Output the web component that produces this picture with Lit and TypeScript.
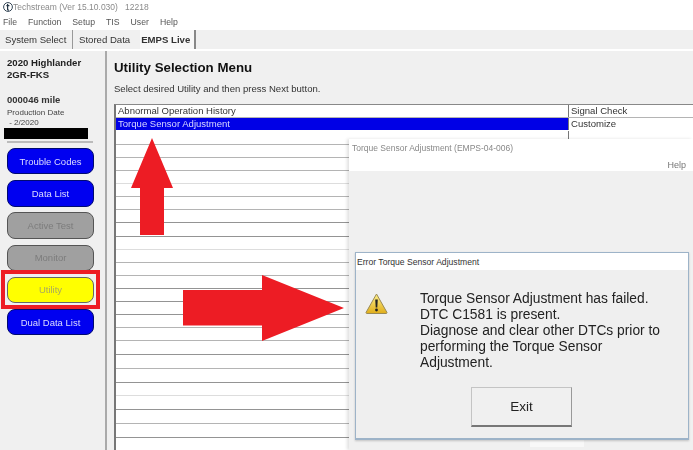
import { LitElement, html, css } from "lit";
import { customElement } from "lit/decorators.js";

const DARK = new Set([8, 9, 13, 14, 15, 18, 20, 22, 24]);
const LIGHT = new Set([5, 10, 21]);

@customElement("app-root")
export class AppRoot extends LitElement {
  static styles = css`
    :host { display: block; width: 693px; height: 450px; overflow: hidden; position: relative; background: #fff; font-family: "Liberation Sans", sans-serif; color: #222; }
    .screen { width: 693px; height: 450px; display: flex; flex-direction: column; filter: blur(0.35px); }
    .title { height: 14px; display: flex; align-items: center; gap: 0; padding-left: 3px; font-size: 8.5px; color: #8a8a8a; white-space: pre; flex: none; }
    .menu { height: 16px; display: flex; padding-left: 3px; gap: 11px; align-items: center; font-size: 8.7px; color: #555; flex: none; }
    .tabs { height: 19px; margin-bottom: 2px; background: #f0f0f0; display: flex; align-items: center; font-size: 9.6px; color: #333; flex: none; }
    .tab { height: 100%; display: flex; align-items: center; }
    .tab.one { width: 73px; box-sizing: border-box; padding-left: 5px; border-right: 1px solid #999; }
    .tab.two { padding: 0 10px 0 6px; }
    .tab.live { padding: 0 4px 0 1px; font-weight: 700; border-right: 2px solid #888; background: #f8f8f8; color: #333; }
    .body { flex: 1; display: flex; background: #f0f0f0; min-height: 0; }
    .side { width: 105px; flex: none; padding: 6px 0 0 0; box-sizing: border-box; color: #222; display: flex; flex-direction: column; }
    .veh { padding-left: 7px; font-size: 9.6px; font-weight: 700; line-height: 12px; }
    .mile { padding: 13px 0 0 7px; font-size: 9.5px; font-weight: 700; line-height: 12px; color: #333; }
    .prod { padding: 2px 0 0 7px; font-size: 8px; line-height: 9.5px; color: #444; white-space: pre; }
    .redact { margin: 1px 0 0 4px; width: 84px; height: 11px; background: #000; }
    .sep { margin: 2px 0 0 7px; width: 86px; height: 2px; background: #bbb; }
    .btns { margin: 5px 0 0 7px; width: 87px; display: flex; flex-direction: column; gap: 5.8px; }
    .btn { height: 26.4px; box-sizing: border-box; border-radius: 8px; display: flex; align-items: center; justify-content: center; font-size: 9.5px; border: 1px solid #333; }
    .btn.blue { background: #0000f0; color: #dcdcff; border-color: #000a70; }
    .btn.gray { background: #a0a0a0; color: #7c7c7c; border-color: #555; }
    .btn.yellow { background: #ffff00; color: #a8a860; border-color: #666; }
    .rule { width: 2px; flex: none; background: #aaa; }
    .main { flex: 1; padding: 0 0 0 7px; min-width: 0; display: flex; flex-direction: column; }
    h1 { margin: 9px 0 0 0; font-size: 13.3px; line-height: 16px; font-weight: 700; color: #111; }
    .hint { margin: 7px 0 0 0; font-size: 9.55px; line-height: 12px; color: #333; }
    .table { margin-top: 9px; flex: 1; background: #fff; border-left: 2px solid #777; border-top: 1px solid #888; font-size: 9.55px; color: #333; overflow: hidden; }
    .row { height: 13.1px; box-sizing: border-box; border-bottom: 1px solid #b4b4b4; display: grid; grid-template-columns: 452px 1fr; line-height: 12px; }
    .row.third { height: 13.7px; }
    .row.tall { height: 13.8px; }
    .row.dark { border-bottom-color: #949494; }
    .row.light { border-bottom-color: #ddd; }
    .row > div { padding-left: 2px; white-space: nowrap; }
    .row > div + div { border-left: 1px solid #777; }
    .row.sel { border-bottom-color: transparent; }
    .row.sel > div:first-child { background: #0000e6; color: #d8d8ff; }
    .overlay { position: absolute; inset: 0; pointer-events: none; }
    .back { position: absolute; left: 349px; top: 139px; width: 344px; height: 311px; background: #f0f0f0; box-shadow: -2px 0 3px rgba(0,0,0,.12); filter: blur(0.35px); }
    .back-title { height: 32px; background: #fff; position: relative; display: flex; flex-direction: column; justify-content: space-between; padding: 4px 7px 1px 3px; box-sizing: border-box; font-size: 8.5px; color: #888; }
    .back-help { align-self: flex-end; font-size: 9px; color: #777; }
    .patch { position: absolute; left: 181px; top: 301px; width: 54px; height: 7px; background: #f8f8f8; }
    .dlg { position: absolute; left: 355px; top: 252px; width: 334px; height: 188px; box-sizing: border-box; border: 1px solid #9db3c8; border-bottom-width: 2px; background: #efefef; box-shadow: 0 1px 2px rgba(0,0,0,.2); display: flex; flex-direction: column; filter: blur(0.3px); }
    .dlg-title { height: 17px; background: #fff; font-size: 8.6px; color: #333; padding-left: 1px; display: flex; align-items: center; flex: none; }
    .dlg-body { display: flex; padding: 21px 0 0 9px; }
    .dlg-body svg { flex: none; margin-top: 2px; }
    .msg { margin-left: 32px; font-size: 13.8px; line-height: 16px; color: #222; width: 250px; }
    .exit { position: absolute; left: 115px; top: 134px; width: 101px; height: 40px; box-sizing: border-box; background: #f0f0f0; border: 1px solid #c4c4c4; border-bottom: 2px solid #777; border-right: 1px solid #999; display: flex; align-items: center; justify-content: center; font-size: 13.5px; color: #222; }
    .ink { position: absolute; left: 0; top: 0; }
    .frame { position: absolute; left: 1px; top: 270px; width: 99px; height: 39px; box-sizing: border-box; border: 4px solid #ed1c24; }
  `;

  render() {
    const rows = Array.from({ length: 26 }, (_, i) => {
      if (i === 0) return html`<div class="row"><div>Abnormal Operation History</div><div>Signal Check</div></div>`;
      if (i === 1) return html`<div class="row sel"><div>Torque Sensor Adjustment</div><div>Customize</div></div>`;
      const tone = DARK.has(i) ? "dark" : LIGHT.has(i) ? "light" : "";
      return html`<div class="row ${tone} ${i === 2 ? "third" : ""} ${i >= 18 ? "tall" : ""}"><div></div><div></div></div>`;
    });
    return html`
      <div class="screen">
        <div class="title">
          <svg width="10" height="10" viewBox="0 0 10 10"><circle cx="5" cy="5" r="4.4" fill="#fff" stroke="#345" stroke-width="1"/><path d="M4.6 2v5.4q0 .8 1.4.6M3.4 3.6h3" stroke="#234" stroke-width="1.2" fill="none"/></svg>
          <span>Techstream (Ver 15.10.030)   12218</span>
        </div>
        <div class="menu"><span>File</span><span>Function</span><span>Setup</span><span>TIS</span><span>User</span><span>Help</span></div>
        <div class="tabs">
          <div class="tab one">System Select</div>
          <div class="tab two">Stored Data</div>
          <div class="tab live">EMPS Live</div>
        </div>
        <div class="body">
          <div class="side">
            <div class="veh">2020 Highlander<br />2GR-FKS</div>
            <div class="mile">000046 mile</div>
            <div class="prod">Production Date
 - 2/2020</div>
            <div class="redact"></div>
            <div class="sep"></div>
            <div class="btns">
              <div class="btn blue">Trouble Codes</div>
              <div class="btn blue">Data List</div>
              <div class="btn gray">Active Test</div>
              <div class="btn gray">Monitor</div>
              <div class="btn yellow">Utility</div>
              <div class="btn blue">Dual Data List</div>
            </div>
          </div>
          <div class="rule"></div>
          <div class="main">
            <h1>Utility Selection Menu</h1>
            <div class="hint">Select desired Utility and then press Next button.</div>
            <div class="table">${rows}</div>
          </div>
        </div>
      </div>
      <div class="overlay">
        <div class="back">
          <div class="back-title">
            <span>Torque Sensor Adjustment (EMPS-04-006)</span>
            <span class="back-help">Help</span>
          </div>
          <div class="patch"></div>
        </div>
        <div class="dlg">
          <div class="dlg-title">Error Torque Sensor Adjustment</div>
          <div class="dlg-body">
            <svg width="23" height="21" viewBox="0 0 23 21">
              <defs><linearGradient id="w" x1="0" y1="0" x2="0" y2="1"><stop offset="0" stop-color="#fdf08a"/><stop offset="1" stop-color="#e0ad1a"/></linearGradient></defs>
              <path d="M11.5 1 L22 19.5 Q22 20.5 21 20.5 H2 Q1 20.5 1 19.5 Z" fill="url(#w)" stroke="#9a8a55" stroke-width="1"/>
              <path d="M10.2 6.5h2.6l-.5 8h-1.6z" fill="#222"/>
              <circle cx="11.5" cy="17" r="1.4" fill="#222"/>
            </svg>
            <div class="msg">Torque Sensor Adjustment has failed.<br />DTC C1581 is present.<br />Diagnose and clear other DTCs prior to performing the Torque Sensor Adjustment.</div>
          </div>
          <div class="exit">Exit</div>
        </div>
        <svg class="ink" width="693" height="450" viewBox="0 0 693 450">
          <path d="M152 138 L173 188 H164 V235 H140 V188 H131 Z" fill="#ed1c24"/>
          <path d="M183 290 H262 V275 L344 308 L262 341 V325.5 H183 Z" fill="#ed1c24"/>
        </svg>
        <div class="frame"></div>
      </div>
    `;
  }
}
